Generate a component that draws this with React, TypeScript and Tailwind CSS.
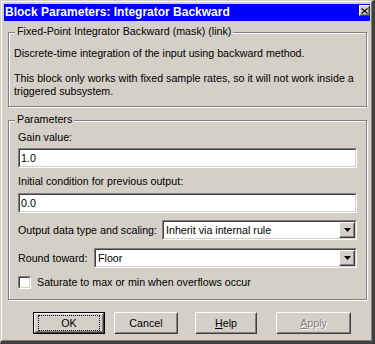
import React from "react";

const Sunken = ({
  className = "",
  children,
}: {
  className?: string;
  children?: React.ReactNode;
}) => (
  <div
    className={`border border-t-[#808080] border-l-[#808080] border-r-white border-b-white ${className}`}
  >
    <div className="h-full w-full border border-t-[#404040] border-l-[#404040] border-r-[#d4d0c8] border-b-[#d4d0c8] bg-white flex items-center">
      {children}
    </div>
  </div>
);

const Raised = ({
  className = "",
  children,
}: {
  className?: string;
  children?: React.ReactNode;
}) => (
  <div
    className={`border border-t-white border-l-white border-r-[#404040] border-b-[#404040] ${className}`}
  >
    <div className="h-full w-full border border-t-[#d4d0c8] border-l-[#d4d0c8] border-r-[#808080] border-b-[#808080] bg-[#d4d0c8] flex items-center justify-center">
      {children}
    </div>
  </div>
);

const Group = ({
  title,
  className = "",
  children,
}: {
  title: string;
  className?: string;
  children?: React.ReactNode;
}) => (
  <div
    className={`relative border border-[#808080] shadow-[inset_1px_1px_0_#fff,1px_1px_0_#fff] ${className}`}
  >
    <span className="absolute left-[6px] top-[-8px] bg-[#d4d0c8] px-[2px] leading-[13px] whitespace-nowrap">
      {title}
    </span>
    {children}
  </div>
);

const Select = ({ value, className = "" }: { value: string; className?: string }) => (
  <Sunken className={`h-[20px] ${className}`}>
    <span className="flex-1 pl-[2px] leading-[13px] whitespace-nowrap">{value}</span>
    <Raised className="h-full w-[16px]">
      <svg width="7" height="4" viewBox="0 0 7 4">
        <path d="M0 0h7L3.5 4z" fill="#000" />
      </svg>
    </Raised>
  </Sunken>
);

export default function App() {
  return (
    <div className="w-[375px] h-[344px] font-['Liberation_Sans',Arial,sans-serif] text-[10.7px] text-black border-l border-t border-l-[#d4d0c8] border-t-[#d4d0c8] border-r-[3px] border-b-[3px] border-r-[#404040] border-b-[#404040]">
      <div className="h-full w-full border border-l-white border-t-white border-r-[#808080] border-b-[#808080] bg-[#d4d0c8] pl-[2px] pt-[2px] pr-[1px] pb-[1px]">
        {/* Title bar */}
        <div className="h-[17px] bg-[#0000ff] flex justify-between items-start">
          <span className="pl-[1px] text-white font-bold text-[12px] leading-[17px] whitespace-nowrap">
            Block Parameters: Integrator Backward
          </span>
          <Raised className="w-[11px] h-[11px] mt-[1px]">
            <svg width="7" height="6" viewBox="0 0 7 6">
              <path d="M0.5 0.5l6 5M6.5 0.5l-6 5" stroke="#000" strokeWidth="1.2" />
            </svg>
          </Raised>
        </div>

        <div className="pt-[11px] pl-[4px] pr-[3px]">
          {/* Description */}
          <Group
            title="Fixed-Point Integrator Backward (mask) (link)"
            className="h-[75px] pt-[14px] pl-[5px] leading-[13px]"
          >
            <p>Discrete-time integration of the input using backward method.</p>
            <p className="mt-[12px]">
              This block only works with fixed sample rates, so it will not work inside a
              <br />
              triggered subsystem.
            </p>
          </Group>

          {/* Parameters */}
          <Group
            title="Parameters"
            className="mt-[13px] h-[180px] pt-[10px] px-[9px] leading-[13px]"
          >
            <div>Gain value:</div>
            <Sunken className="mt-[4px] h-[20px]">
              <span className="pl-[1px]">1.0</span>
            </Sunken>
            <div className="mt-[7px]">Initial condition for previous output:</div>
            <Sunken className="mt-[5px] h-[20px]">
              <span className="pl-[1px]">0.0</span>
            </Sunken>
            <div className="mt-[7px] flex items-center">
              <span className="w-[144px] whitespace-nowrap">Output data type and scaling:</span>
              <Select value="Inherit via internal rule" className="flex-1" />
            </div>
            <div className="mt-[8px] flex items-center">
              <span className="w-[76px] whitespace-nowrap">Round toward:</span>
              <Select value="Floor" className="flex-1" />
            </div>
            <div className="mt-[8px] flex items-center">
              <Sunken className="w-[13px] h-[13px]" />
              <span className="ml-[6px]">Saturate to max or min when overflows occur</span>
            </div>
          </Group>

          {/* Buttons */}
          <div className="mt-[12px] flex">
            <div className="ml-[25px] w-[72px] h-[22px] border border-black">
              <Raised className="h-full w-full">
                <span className="w-full h-full m-[2px] border border-dotted border-black flex items-center justify-center">
                  OK
                </span>
              </Raised>
            </div>
            <Raised className="ml-[9px] w-[64px] h-[22px]">
              <span>Cancel</span>
            </Raised>
            <Raised className="ml-[17px] w-[62px] h-[22px]">
              <span>
                <span className="underline">H</span>elp
              </span>
            </Raised>
            <Raised className="ml-[19px] w-[75px] h-[22px]">
              <span className="text-[#808080] [text-shadow:1px_1px_0_#fff]">
                <span className="underline">A</span>pply
              </span>
            </Raised>
          </div>
        </div>
      </div>
    </div>
  );
}
